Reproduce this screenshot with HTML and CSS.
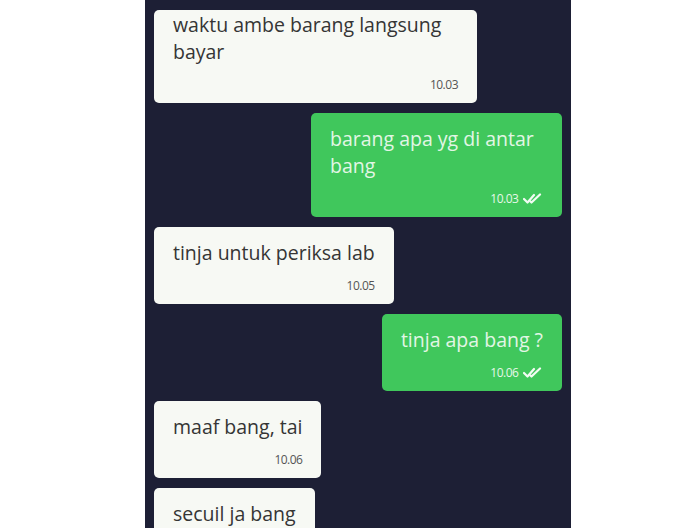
FILE: index.html
```html
<!DOCTYPE html>
<html lang="id">
  <head>
    <meta charset="UTF-8" />
    <meta name="viewport" content="width=device-width, initial-scale=1.0" />
    <title>Chat</title>
    <link rel="stylesheet" href="styles.css">
  </head>
  <body>
    <div class="screen">
      <div class="chat">
        <div class="bubble in cut">
          <div class="text">waktu ambe barang langsung bayar</div>
          <div class="meta">10.03</div>
        </div>
        <div class="bubble out">
          <div class="text">barang apa yg di antar bang</div>
          <div class="meta">10.03
            <svg class="ticks" width="20" height="11" viewBox="0 0 20 11">
              <path d="M1 6 L4.5 9.5 L11 2" />
              <path d="M7.5 8.5 L8.5 9.5 L17 1.5" />
            </svg>
          </div>
        </div>
        <div class="bubble in">
          <div class="text">tinja untuk periksa lab</div>
          <div class="meta">10.05</div>
        </div>
        <div class="bubble out">
          <div class="text">tinja apa bang ?</div>
          <div class="meta">10.06
            <svg class="ticks" width="20" height="11" viewBox="0 0 20 11">
              <path d="M1 6 L4.5 9.5 L11 2" />
              <path d="M7.5 8.5 L8.5 9.5 L17 1.5" />
            </svg>
          </div>
        </div>
        <div class="bubble in">
          <div class="text">maaf bang, tai</div>
          <div class="meta">10.06</div>
        </div>
        <!-- last message runs past the bottom of the screenshot -->
        <div class="bubble in last">
          <div class="text">secuil ja bang</div>
        </div>
      </div>
    </div>
  </body>
</html>
```

FILE: styles.css
```css
body {
  margin: 0;
  padding: 0;
  background-color: #fff;
  font-family: "Open Sans", Arial, sans-serif;
  height: 528px;
  overflow: hidden;
}
.screen {
  margin-left: 145px;
  width: 426px;
  height: 528px;
  background-color: #1d1f35;
  overflow: hidden;
}
.chat {
  display: flex;
  flex-direction: column;
  gap: 10px;
  padding: 10px 9px;
}
.bubble {
  width: fit-content;
  border-radius: 5px;
  padding: 12px 19px 10px;
  box-sizing: border-box;
}
.bubble.cut {
  padding-top: 1px;
}
.bubble.last {
  padding-bottom: 30px;
}
.in {
  align-self: flex-start;
  max-width: 323px;
  background-color: #f7f9f4;
  color: #353535;
}
.out {
  align-self: flex-end;
  max-width: 251px;
  background-color: #40c75c;
  color: #e2f6e5;
}
.text {
  font-size: 19.5px;
  line-height: 27px;
}
.meta {
  margin-top: 12px;
  height: 16px;
  line-height: 16px;
  font-size: 12px;
  letter-spacing: -0.5px;
  text-align: right;
  color: #555;
}
.out .meta {
  color: #e6f7e8;
}
.ticks {
  vertical-align: -1px;
  margin-left: 2px;
}
.ticks path {
  fill: none;
  stroke: #f2fbf3;
  stroke-width: 2.2;
  stroke-linecap: round;
  stroke-linejoin: round;
}
```
